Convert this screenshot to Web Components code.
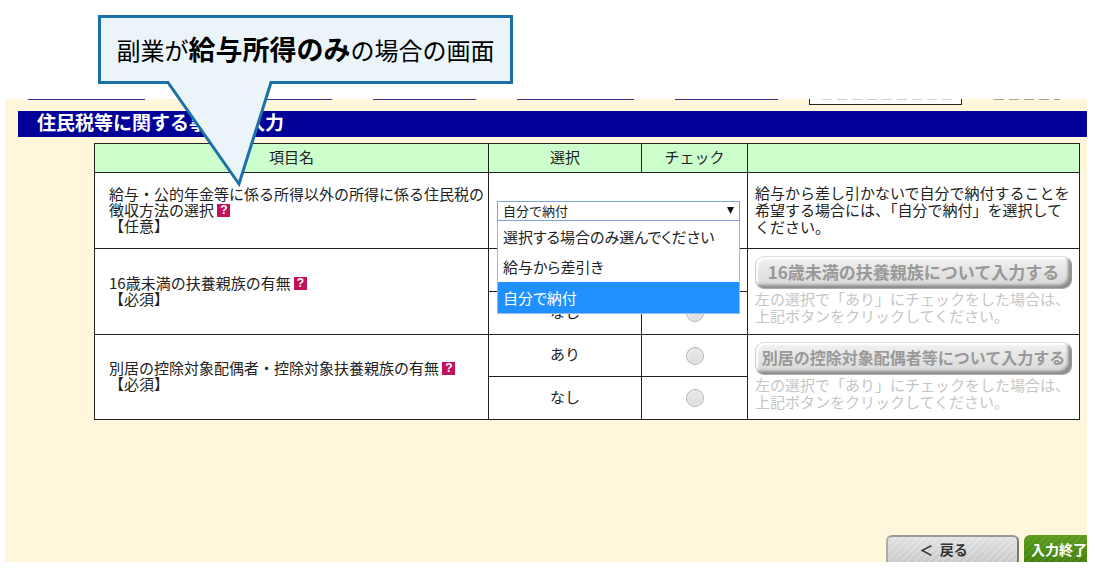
<!DOCTYPE html>
<html lang="ja">
<head>
<meta charset="utf-8">
<title>住民税等に関する事項の入力</title>
<style>
body { margin: 0; background: #fff; color: #222; font: 15px/16px "Noto Sans CJK JP", sans-serif; }
</style>
</head>
<body>
<tax-page></tax-page>
<script>
function define(name, html) {
  const t = document.createElement('template');
  t.innerHTML = html;
  customElements.define(name, class extends HTMLElement {
    constructor() {
      super();
      this.attachShadow({ mode: 'open' }).append(t.content.cloneNode(true));
    }
  });
}

define('note-callout', `
<style>
:host { display: block; }
.box { box-sizing: border-box; height: 69px; padding: 0 16px; border: 3px solid #1b70a9; background: #ebf5f9;
  display: flex; align-items: center; justify-content: center; font-size: 24px; line-height: 36px; color: #000; white-space: nowrap; }
::slotted(p) { margin: 0; }
svg { position: absolute; left: 68px; top: 65px; }
</style>
<div class="box"><slot></slot></div>
<svg width="108" height="108" viewBox="0 0 108 108" aria-hidden="true">
<path d="M1 0H106L105.500 2.500L73 104L2 2.500Z" fill="#ebf5f9"/>
<path d="M0 2.500H2L73 104L105 2.500H108" fill="none" stroke="#1b70a9" stroke-width="3"/>
</svg>`);

define('top-nav', `
<style>
:host { display: block; height: 12px; overflow: hidden; }
nav { display: flex; align-items: flex-start; padding-left: 23px; }
a { height: 1px; width: 117px; margin-right: 41px; background: #3a3088; }
a.s { width: 103px; }
.l1 { margin-right: 78px; }
.l2 { width: 109px; }
.cur { box-sizing: border-box; width: 153px; height: 6px; margin: 0 32px 0 -10px; border: 1px solid #222; border-top: 0; background: #fff; }
i { display: block; height: 1px; width: 66px; background: repeating-linear-gradient(90deg, #a9a397 0 10px, transparent 10px 15px); }
.cur i { width: 130px; margin-left: 12px; opacity: .5; }
</style>
<nav aria-label="手順">
<a href="#1" class="l1" aria-label="手順1"></a><a href="#2" class="l2" aria-label="手順2"></a><a href="#3" class="s" aria-label="手順3"></a><a href="#4" aria-label="手順4"></a><a href="#5" class="s" aria-label="手順5"></a>
<div class="cur"><i></i></div><i></i>
</nav>`);

define('section-title', `
<style>
:host { display: block; margin: 0 0 6px 13px; background: #000098; color: #fff; }
h1 { margin: 0; padding: 0 0 4px 19px; font-size: 19px; line-height: 22px; font-weight: 700; }
</style>
<h1><slot></slot></h1>`);

define('help-mark', `
<style>
:host { display: inline-block; vertical-align: top; padding-top: 2px; }
a { display: block; width: 13px; height: 13px; background: #c3125c; color: #fff; text-align: center; text-decoration: none;
  font: 700 12px/13px "Liberation Sans", sans-serif; }
</style>
<a href="#help" aria-label="ヘルプ">?</a>`);

define('pay-select', `
<style>
:host { display: block; position: relative; margin: 0 7px 0 8px; color: #222; }
select { display: block; box-sizing: border-box; width: 100%; height: 20px; margin: 0; padding: 0 5px; border: 1px solid #7ba3dc; border-radius: 0;
  appearance: none; background: #fff; color: inherit; font: 13px/18px "Noto Sans CJK JP", sans-serif; }
svg { position: absolute; right: 6px; top: 6px; pointer-events: none; }
ul { position: absolute; z-index: 1; top: 20px; left: 0; right: 0; margin: 0; padding: 1px 0 0; list-style: none; background: #fff;
  border: 1px solid #9bbbe6; border-top: 0; font-size: 15px; line-height: 30px; text-align: left; font-feature-settings: "palt"; }
li { padding-left: 5px; white-space: nowrap; }
li[aria-selected=true] { background: #1e90ff; color: #fff; line-height: 31px; }
</style>
<select aria-label="徴収方法の選択"><option>選択する場合のみ選んでください</option><option>給与から差引き</option><option selected>自分で納付</option></select>
<svg width="7" height="7" viewBox="0 0 7 7" aria-hidden="true"><path d="M0 0H7L3.500 7Z" fill="#111"/></svg>
<ul role="listbox" aria-label="徴収方法の選択肢">
<li role="option" aria-selected="false">選択する場合のみ選んでください</li>
<li role="option" aria-selected="false">給与から差引き</li>
<li role="option" aria-selected="true">自分で納付</li>
</ul>`);

define('choice-radio', `
<style>
:host { display: flex; justify-content: center; }
input { appearance: none; box-sizing: border-box; width: 18px; height: 18px; margin: 0; border: 1px solid #b5b5b5; border-radius: 50%;
  background: linear-gradient(#e9e9e9, #dcdcdc); box-shadow: inset 0 0 1px 1px #eee; }
</style>
<input type="radio" disabled aria-label="選択">`);

define('detail-entry', `
<style>
:host { display: block; line-height: 17px; color: #c6c6c6; }
button { display: block; box-sizing: border-box; width: 100%; height: 33px; margin: 0 0 1px; padding: 0 0 2px; border: 1px solid; border-color: #ddd #999 #aaa #ccc;
  border-radius: 9px; background: linear-gradient(#f2f2f2, #d6d6d6); box-shadow: inset -4px -4px 3px -1px #8c8c8c, inset 2px 2px 2px #fff;
  color: #999; font: 700 16px/28px "Noto Sans CJK JP", sans-serif; white-space: nowrap; }
:host([wide]) button { font-size: 17px; }
p { margin: 0; white-space: nowrap; }
</style>
<button type="button" disabled><slot></slot></button>
<p>左の選択で「あり」にチェックをした場合は、<br>上記ボタンをクリックしてください。</p>`);

define('resident-table', `
<style>
:host { display: block; margin: 0 7px 0 89px; }
table { width: 100%; border-collapse: collapse; table-layout: fixed; background: #fff; }
th, td { box-sizing: border-box; padding: 0 0 3px; border: 1px solid #222; font-weight: 400; text-align: center; }
thead th { height: 29px; background: #ccffcc; }
tbody th { padding: 0 0 2px 14px; text-align: left; white-space: nowrap; }
.c2 { width: 153px; } .c3 { width: 106px; } .c4 { width: 332px; }
td.ctl { padding: 0; }
.info { padding: 0 7px 3px; text-align: left; line-height: 17px; white-space: nowrap; }
.first { height: 76px; }
.sub { height: 43px; }
.low { height: 42px; }
</style>
<table>
<colgroup><col><col class="c2"><col class="c3"><col class="c4"></colgroup>
<thead><tr><th>項目名</th><th>選択</th><th>チェック</th><th></th></tr></thead>
<tbody>
<tr><th class="first" scope="row">給与・公的年金等に係る所得以外の所得に係る住民税の<br>徴収方法の選択 <help-mark></help-mark><br>【任意】</th>
<td class="ctl" colspan="2"><pay-select></pay-select></td>
<td class="info">給与から差し引かないで自分で納付することを<br>希望する場合には、「自分で納付」を選択して<br>ください。</td></tr>
<tr><th rowspan="2" scope="row">16歳未満の扶養親族の有無 <help-mark></help-mark><br>【必須】</th>
<td class="sub">あり</td><td class="ctl"><choice-radio></choice-radio></td>
<td class="info" rowspan="2"><detail-entry wide>16歳未満の扶養親族について入力する</detail-entry></td></tr>
<tr><td class="sub">なし</td><td class="ctl"><choice-radio></choice-radio></td></tr>
<tr><th rowspan="2" scope="row">別居の控除対象配偶者・控除対象扶養親族の有無 <help-mark></help-mark><br>【必須】</th>
<td class="low">あり</td><td class="ctl"><choice-radio></choice-radio></td>
<td class="info" rowspan="2"><detail-entry>別居の控除対象配偶者等について入力する</detail-entry></td></tr>
<tr><td class="sub">なし</td><td class="ctl"><choice-radio></choice-radio></td></tr>
</tbody>
</table>`);

define('page-actions', `
<style>
:host { display: flex; justify-content: flex-end; gap: 5px; height: 27px; margin-top: 115px; overflow: hidden; }
button { flex: none; box-sizing: border-box; height: 34px; margin: 0; padding: 0 0 6px; border-radius: 6px; font: 700 14px/24px "Noto Sans CJK JP", sans-serif; white-space: pre; }
.back { width: 133px; padding-right: 18px; border: 2px solid; border-color: #999 #777 #777 #aaa; color: #333;
  background: repeating-linear-gradient(135deg, #fff3 0 2px, transparent 2px 5px), linear-gradient(#e2e2e2, #c4c4c4); }
.done { width: 100px; margin-right: -37px; padding-left: 7px; text-align: left; border: 0; color: #fff;
  background: repeating-linear-gradient(135deg, #ffffff14 0 2px, transparent 2px 5px), linear-gradient(#5a9a1c, #3c7a08); }
</style>
<button type="button" class="back">＜  戻る</button><button type="button" class="done">入力終了</button>`);

define('tax-page', `
<style>
:host { display: block; position: relative; padding: 99px 11px 13px 5px; }
main { display: block; background: #fff6dc; overflow: hidden; }
note-callout { position: absolute; left: 98px; top: 15px; width: 415px; }
b { font-size: 27px; }
</style>
<main>
<top-nav></top-nav>
<section-title>住民税等に関する事項の入力</section-title>
<resident-table></resident-table>
<page-actions></page-actions>
</main>
<note-callout><p>副業が<b>給与所得のみ</b>の場合の画面</p></note-callout>`);
</script>
</body>
</html>
